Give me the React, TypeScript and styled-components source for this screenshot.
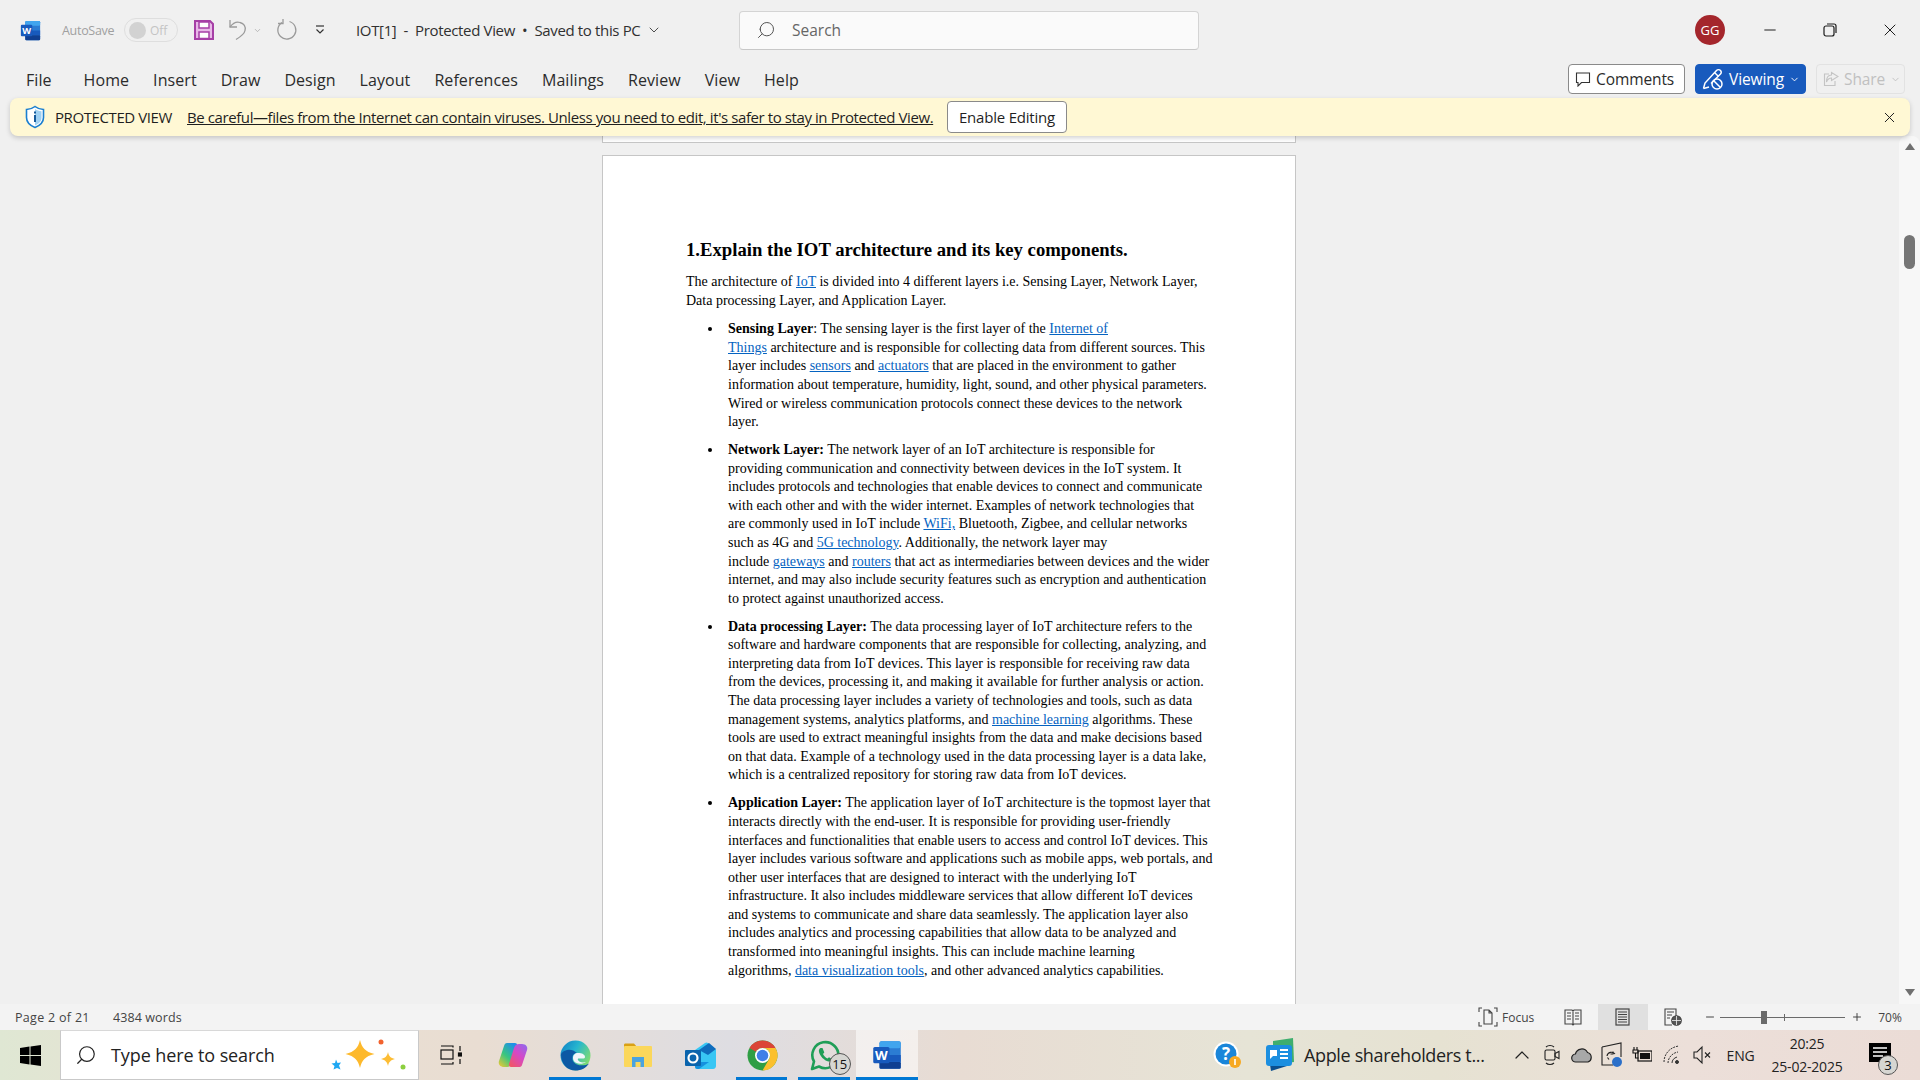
import React from 'react';
import styled, { createGlobalStyle } from 'styled-components';
import { ChevronDown, ChevronUp, Minus, Plus, Search, X } from 'lucide-react';

const GlobalStyle = createGlobalStyle`
  html, body { margin: 0; padding: 0; overflow: hidden; }
  * { box-sizing: border-box; }
  body { font-family: 'Open Sans', 'Noto Sans', sans-serif; color: #262626; }
`;

const Window = styled.div`
  width: 1920px;
  height: 1080px;
  display: flex;
  flex-direction: column;
  background: #f0f0f0;
  overflow: hidden;
`;

const TitleBar = styled.div`
  height: 60px;
  display: flex;
  align-items: center;
  padding-left: 20px;
  flex: none;
`;

const AutoSaveLabel = styled.span`
  margin-left: 21px;
  width: 62px;
  font-size: 12.5px;
  letter-spacing: -0.3px;
  color: #a0a0a0;
`;

const Toggle = styled.div`
  width: 54px;
  height: 24px;
  border: 1px solid #dedede;
  border-radius: 12px;
  display: flex;
  align-items: center;
  padding-left: 4px;
  gap: 4px;
  font-size: 12px;
  color: #c4c4c4;
  &::before {
    content: '';
    width: 17px;
    height: 17px;
    border-radius: 50%;
    background: #d2d2d2;
  }
`;

const QuickIcon = styled.span<{ $w: number; $ml?: number }>`
  width: ${({ $w }) => $w}px;
  margin-left: ${({ $ml }) => $ml ?? 0}px;
  display: flex;
  align-items: center;
  justify-content: center;
  flex: none;
`;

const DocTitle = styled.span`
  margin-left: 30px;
  width: 290px;
  font-size: 15px;
  letter-spacing: -0.35px;
  white-space: pre;
  color: #303030;
`;

const SearchBox = styled.div`
  margin-left: 77px;
  width: 460px;
  height: 39px;
  background: #fafafa;
  border: 1px solid #d4d4d4;
  border-bottom-color: #c8c8c8;
  border-radius: 4px;
  display: flex;
  align-items: center;
  padding-left: 16px;
  gap: 16px;
  font-size: 15.5px;
  color: #666;
`;

const Avatar = styled.div`
  margin-left: 496px;
  width: 30px;
  height: 30px;
  border-radius: 50%;
  background: #a4262c;
  color: #fff;
  font-size: 13px;
  display: flex;
  align-items: center;
  justify-content: center;
`;

const WindowButton = styled.div<{ $ml: number }>`
  margin-left: ${({ $ml }) => $ml}px;
  width: 20px;
  display: flex;
  justify-content: center;
  color: #1c1c1c;
`;

const RibbonRow = styled.div`
  height: 38px;
  flex: none;
  display: flex;
  align-items: center;
  padding: 0 15px 0 26px;
`;

const Tab = styled.span<{ $first?: boolean }>`
  margin-top: 2px;
  font-size: 16px;
  letter-spacing: 0.07px;
  margin-right: ${({ $first }) => ($first ? 32 : 24)}px;
  color: #2b2b2b;
`;

const RibbonActions = styled.div`
  margin-left: auto;
  display: flex;
  gap: 10px;
  height: 30px;
`;

const ActionButton = styled.div<{ $w: number; $kind: 'plain' | 'primary' | 'off' }>`
  width: ${({ $w }) => $w}px;
  height: 30px;
  border-radius: 4px;
  display: flex;
  align-items: center;
  gap: 5px;
  padding-left: 6px;
  font-size: 15.5px;
  letter-spacing: -0.1px;
  background: ${({ $kind }) => ($kind === 'plain' ? '#fff' : $kind === 'primary' ? '#185abd' : '#f0f0f0')};
  color: ${({ $kind }) => ($kind === 'plain' ? '#2b2b2b' : $kind === 'primary' ? '#fff' : '#c0c0c0')};
  border: 1px solid ${({ $kind }) => ($kind === 'plain' ? '#8a8a8a' : $kind === 'primary' ? '#185abd' : '#e2e2e2')};
`;

const Banner = styled.div`
  flex: none;
  position: relative;
  z-index: 2;
  height: 38px;
  margin: 0 10px;
  padding: 0 12px 0 15px;
  display: flex;
  align-items: center;
  background: #fff8d4;
  border-radius: 8px;
  box-shadow: 0 2px 5px rgba(0, 0, 0, 0.18);
  font-size: 15px;
  letter-spacing: -0.41px;
  color: #1f1f1f;
`;

const BannerTitle = styled.span`
  margin-left: 10px;
  margin-right: 12px;
  width: 120px;
  white-space: nowrap;
`;

const BannerLink = styled.span`
  width: 760px;
  white-space: nowrap;
  text-decoration: underline;
`;

const EnableButton = styled.div`
  width: 120px;
  height: 32px;
  background: #fff;
  border: 1px solid #8a8a8a;
  border-radius: 4px;
  display: flex;
  align-items: center;
  justify-content: center;
  letter-spacing: -0.2px;
`;

const BannerClose = styled.div`
  margin-left: auto;
  display: flex;
`;

const DocArea = styled.div`
  flex: 1;
  min-height: 0;
  display: flex;
`;

const PageColumn = styled.div`
  flex: 1;
  min-width: 0;
  padding-right: 2px;
  display: flex;
  flex-direction: column;
  align-items: center;
  overflow: hidden;
`;

const PageStub = styled.div`
  flex: none;
  width: 694px;
  height: 7px;
  background: #fff;
  border: 1px solid #c6c6c6;
  border-top: none;
`;

const Page = styled.div`
  flex: none;
  width: 694px;
  height: 900px;
  margin-top: 12px;
  padding: 82px 0 0 83.5px;
  background: #fff;
  border: 1px solid #c6c6c6;
  font-family: 'Liberation Serif', 'Times New Roman', serif;
  color: #000;
  font-size: 14px;
  line-height: 18.6px;
  white-space: nowrap;
`;

const Heading = styled.h1`
  margin: 0 0 11px;
  font-size: 18.7px;
  line-height: 24px;
  font-weight: 700;
`;

const Line = styled.span`
  display: block;
`;

const Intro = styled.p`
  margin: 0 0 10px;
`;

const List = styled.ul`
  margin: 0;
  padding: 0 0 0 42px;
  list-style: none;
`;

const Item = styled.li`
  position: relative;
  margin-bottom: 9.3px;
  &::before {
    content: '';
    position: absolute;
    left: -20px;
    top: 7px;
    width: 4px;
    height: 4px;
    border-radius: 50%;
    background: #000;
  }
`;

const Link = styled.span`
  color: #0563c1;
  text-decoration: underline;
`;

const Scrollbar = styled.div`
  flex: none;
  width: 21px;
  display: flex;
  flex-direction: column;
  align-items: center;
  background: #f7f7f7;
  border-radius: 8px 8px 0 0;
`;

const ScrollArrow = styled.div<{ $down?: boolean }>`
  width: 0;
  height: 0;
  border-left: 5.5px solid transparent;
  border-right: 5.5px solid transparent;
  ${({ $down }) => ($down ? 'border-top: 7px solid #707070;' : 'border-bottom: 7px solid #707070;')}
  margin-top: ${({ $down }) => ($down ? 'auto' : '7px')};
  margin-bottom: ${({ $down }) => ($down ? '8px' : '0')};
`;

const ScrollThumb = styled.div`
  margin-top: 85px;
  width: 11px;
  height: 34px;
  border-radius: 5.5px;
  background: #757575;
`;

const StatusBar = styled.div`
  flex: none;
  height: 26px;
  display: flex;
  align-items: center;
  padding-left: 15px;
  background: #f3f3f3;
  font-size: 12px;
  color: #444;
`;

const StatusText = styled.span<{ $w: number; $ls: number }>`
  width: ${({ $w }) => $w}px;
  font-size: 12.5px;
  letter-spacing: ${({ $ls }) => $ls}px;
  white-space: nowrap;
`;

const StatusRight = styled.div`
  margin-left: auto;
  height: 100%;
  padding-right: 9px;
  display: flex;
  align-items: center;
`;

const FocusButton = styled.div`
  width: 69px;
  height: 100%;
  display: flex;
  align-items: center;
  gap: 4px;
`;

const ViewButton = styled.div<{ $w: number; $active?: boolean }>`
  width: ${({ $w }) => $w}px;
  height: 100%;
  display: flex;
  align-items: center;
  justify-content: center;
  background: ${({ $active }) => ($active ? '#e0e0e0' : 'transparent')};
`;

const ZoomOut = styled.span`
  margin: 0 4px 0 6px;
  display: flex;
`;

const ZoomTrack = styled.div`
  position: relative;
  width: 125px;
  height: 1px;
  margin-right: 6px;
  background: #6a6a6a;
`;

const ZoomTick = styled.div`
  position: absolute;
  left: 64px;
  top: -3px;
  width: 1px;
  height: 7px;
  background: #6a6a6a;
`;

const ZoomThumb = styled.div`
  position: absolute;
  left: 41px;
  top: -6px;
  width: 6px;
  height: 13px;
  background: #6a6a6a;
`;

const ZoomValue = styled.span`
  width: 42px;
  margin-left: 6px;
  text-align: center;
`;

const Taskbar = styled.div`
  flex: none;
  height: 50px;
  display: flex;
  background: linear-gradient(90deg, #dfe7d3 0%, #e9e1d3 10%, #e9ddd2 25%, #dedde2 38%, #e8dcd3 50%, #e6e4d6 65%, #e6e2d2 75%, #ecdfd9 88%, #ebdcd6 100%);
`;

const StartCell = styled.div`
  width: 60px;
  display: flex;
  align-items: center;
  justify-content: center;
  flex: none;
`;

const TaskSearch = styled.div`
  position: relative;
  width: 359px;
  flex: none;
  background: #fff;
  border: 1px solid #c9c9c9;
  border-top-color: #d8d8d8;
  display: flex;
  align-items: center;
  padding-left: 14px;
  gap: 14px;
  font-size: 18px;
  letter-spacing: -0.1px;
  color: #222;
`;

const Sparkles = styled.span`
  position: absolute;
  right: 10px;
  top: 7px;
  display: flex;
`;

const TaskView = styled.div`
  width: 63px;
  flex: none;
  display: flex;
  align-items: center;
  justify-content: center;
`;

const TaskIcon = styled.div<{ $open?: boolean; $active?: boolean }>`
  position: relative;
  width: 62.3px;
  flex: none;
  display: flex;
  align-items: center;
  justify-content: center;
  background: ${({ $active }) => ($active ? 'rgba(255,255,255,0.55)' : 'transparent')};
  &::after {
    content: '';
    display: ${({ $open }) => ($open ? 'block' : 'none')};
    position: absolute;
    left: ${({ $active }) => ($active ? '0' : '5px')};
    right: ${({ $active }) => ($active ? '0' : '6px')};
    bottom: 0;
    height: 3px;
    background: #0078d4;
  }
`;

const CountBadge = styled.span<{ $right: number; $size: number }>`
  position: absolute;
  right: ${({ $right }) => $right}px;
  bottom: 5px;
  width: ${({ $size }) => $size}px;
  height: ${({ $size }) => $size}px;
  border-radius: 50%;
  border: 1px solid #555;
  background: #d6d6d2;
  color: #111;
  font-size: 13px;
  display: flex;
  align-items: center;
  justify-content: center;
`;

const Tray = styled.div`
  margin-left: auto;
  display: flex;
  align-items: stretch;
`;

const TrayCell = styled.div<{ $w: number; $ml?: number }>`
  position: relative;
  width: ${({ $w }) => $w}px;
  margin-left: ${({ $ml }) => $ml ?? 0}px;
  display: flex;
  align-items: center;
  justify-content: center;
  flex: none;
`;

const NewsText = styled.span`
  width: 180px;
  margin-left: 6px;
  display: flex;
  align-items: center;
  font-size: 18px;
  letter-spacing: -0.35px;
  white-space: nowrap;
  color: #222;
`;

const TrayText = styled.span`
  font-size: 14px;
  letter-spacing: -0.2px;
  color: #222;
`;

const Clock = styled.div`
  display: flex;
  flex-direction: column;
  align-items: center;
  gap: 6px;
  font-size: 14px;
  line-height: 17px;
  letter-spacing: -0.2px;
  color: #222;
`;

const NotifyCell = styled.div`
  position: relative;
  width: 70px;
  padding-right: 10px;
  display: flex;
  align-items: center;
  justify-content: center;
  flex: none;
`;

const WordLogo = ({ size }: { size: number }) => (
  <svg width={size} height={size} viewBox="0 0 24 24">
    <rect x="6" y="1" width="17" height="22" rx="1.5" fill="#2b7cd3" />
    <rect x="6" y="1" width="17" height="5.5" rx="1.5" fill="#41a5ee" />
    <rect x="6" y="12" width="17" height="5.5" fill="#185abd" />
    <rect x="6" y="17.5" width="17" height="5.5" rx="1" fill="#103f91" />
    <rect x="1" y="5.5" width="13" height="13" rx="1.2" fill="#185abd" />
    <text x="7.5" y="15.6" textAnchor="middle" fontSize="10.5" fontWeight="700" fill="#fff" fontFamily="Open Sans, sans-serif">W</text>
  </svg>
);

const SaveIcon = () => (
  <svg width="20" height="20" viewBox="0 0 20 20">
    <path d="M1 1h15l3 3v15H1z" fill="#e8b8e8" stroke="#a63fa6" strokeWidth="2" />
    <rect x="5" y="2" width="10" height="6" fill="#fff" stroke="#a63fa6" strokeWidth="1.5" />
    <rect x="5" y="12" width="10" height="6.5" fill="#fff" stroke="#a63fa6" strokeWidth="1.5" />
  </svg>
);

const UndoIcon = () => (
  <svg width="20" height="22" viewBox="0 0 20 22" fill="none" stroke="#9a9a9a" strokeWidth="1.3">
    <path d="M2 1v7h7" />
    <path d="M2 8C5 4 9 2.500 12 3.500c4 1 6 4 5 8-.5 3-4 6-9 9" />
  </svg>
);

const RedoIcon = () => (
  <svg width="22" height="22" viewBox="0 0 22 22" fill="none" stroke="#9a9a9a" strokeWidth="1.3">
    <path d="M13.500 2.500a9 9 0 1 1-7.500 1" />
    <path d="M7 0v4.500H2" />
  </svg>
);

const CustomizeIcon = () => (
  <svg width="12" height="12" viewBox="0 0 12 12" fill="none" stroke="#333" strokeWidth="1.2">
    <path d="M2 2h8" />
    <path d="M2.500 5.500 6 9l3.500-3.500" />
  </svg>
);

const ShieldIcon = () => (
  <svg width="20" height="24" viewBox="0 0 20 24">
    <path d="M10 1.500c2.500 2 5 2.800 8.500 3v8c0 5-3.500 8-8.500 10-5-2-8.500-5-8.500-10v-8c3.500-.2 6-1 8.500-3z" fill="#fff" stroke="#1b7fd0" strokeWidth="1.6" />
    <path d="M10 4c2 1.400 4 2 6.500 2.300v6.500c0 3.500-2.500 6-6.500 7.700z" fill="#9fd0f2" />
    <rect x="9" y="10" width="2" height="7" fill="#155a9c" />
    <rect x="9" y="6.500" width="2" height="2" fill="#155a9c" />
  </svg>
);

const CommentIcon = () => (
  <svg width="16" height="16" viewBox="0 0 16 16" fill="none" stroke="#333" strokeWidth="1.1">
    <path d="M1.500 2h13v9.500H6.500L3 15v-3.500H1.500z" />
  </svg>
);

const ViewingIcon = () => (
  <svg width="22" height="22" viewBox="0 0 22 22" fill="none" stroke="#fff" strokeWidth="1.500">
    <path d="M1.500 20.500 3 15 14.500 2.500c1-1 3-1 4 0s1 2.500 0 3.500L9 15.500" />
    <path d="M1.500 20.500 7 19" />
    <path d="M12.500 4.500 16.500 8.500" />
    <circle cx="15" cy="16" r="5" />
    <path d="m11.500 12.500 7 7" />
  </svg>
);

const ShareIcon = () => (
  <svg width="16" height="16" viewBox="0 0 16 16" fill="none" stroke="#c4c4c4" strokeWidth="1.100">
    <path d="M8.500 1.500 15 5.500l-6.500 4V7C5.500 7 4.500 8.500 3.500 11 3.500 6.500 5 4 8.500 4z" />
    <path d="M6 3H1.500v11.500H12V10" />
  </svg>
);

const WindowsLogo = () => (
  <svg width="21" height="21" viewBox="0 0 21 21" fill="#000">
    <path d="M0 3 9.500 1.600v8.400H0zM10.500 1.500 21 0v10H10.500zM0 11h9.500v8.400L0 18zM10.500 11H21v10l-10.500-1.500z" />
  </svg>
);

const SparkleIcons = () => (
  <svg width="78" height="34" viewBox="0 0 78 34">
    <path d="M6 21.500l1.500 3.500 3.500-.5-2 3 1.500 4-3.500-1.500-3.500 1.500 1-3.500-3-2.500 3.500-.5z" fill="#1ea7f2" />
    <path d="M30 2c2 8 5 11.500 14.500 14C35 18.500 32 22 30 30c-2-8-5-11.500-14.500-14C25 13.500 28 10 30 2z" fill="#fdb92c" />
    <path d="M58 14c.9 4 2.500 6 7 7-4.500 1-6.100 3-7 7-.9-4-2.500-6-7-7 4.500-1 6.100-3 7-7z" fill="#fdbd34" />
    <circle cx="51" cy="4" r="2.500" fill="#f2622e" />
    <circle cx="73" cy="29" r="2.500" fill="#8ccf3f" />
  </svg>
);

const TaskViewIcon = () => (
  <svg width="22" height="20" viewBox="0 0 22 20" fill="none" stroke="#111" strokeWidth="1.200">
    <rect x="1" y="5" width="12" height="9" />
    <path d="M1 1h12v1.500M1 19h12v-2" />
    <path d="M20 1v5M20 14v5" />
    <rect x="18.500" y="8" width="3" height="3" fill="#111" />
  </svg>
);

const CopilotIcon = () => (
  <svg width="30" height="26" viewBox="0 0 30 26">
    <defs>
      <linearGradient id="cpA" x1="0" y1="1" x2="0.700" y2="0">
        <stop offset="0" stopColor="#f6c92f" />
        <stop offset="0.500" stopColor="#39c67f" />
        <stop offset="1" stopColor="#1f8fe8" />
      </linearGradient>
      <linearGradient id="cpB" x1="0.200" y1="1" x2="1" y2="0">
        <stop offset="0" stopColor="#f0556a" />
        <stop offset="0.500" stopColor="#d548c8" />
        <stop offset="1" stopColor="#8a6cf0" />
      </linearGradient>
    </defs>
    <path d="M9 1h8c1.500 0 2.500 1 2 3l-5 16c-.8 3-2.500 5-5 5H6C2 25 0 22 1 19L6 4c.5-2 1.500-3 3-3z" fill="url(#cpA)" />
    <path d="M21 25h-8c-1.500 0-2.300-1-2-3l5-16c.8-2.500 2.500-4 5-4h3c4 0 6 3 5 6l-5 15c-.5 1.500-1.500 2-3 2z" fill="url(#cpB)" />
  </svg>
);

const EdgeIcon = () => (
  <svg width="31" height="31" viewBox="0 0 31 31">
    <defs>
      <linearGradient id="edA" x1="0" y1="0" x2="1" y2="0.600">
        <stop offset="0" stopColor="#0f7bc4" />
        <stop offset="0.500" stopColor="#26b6cf" />
        <stop offset="1" stopColor="#7fdc70" />
      </linearGradient>
    </defs>
    <circle cx="15.500" cy="15.500" r="15" fill="url(#edA)" />
    <path d="M1 14c0 10 6 16.500 14.500 16.500 6 0 10.500-2.500 13.500-7-3 2-8 2.500-12 1-3-1.200-5-4-4.500-7C12.800 14 15 13 17 13c-3-3-7-4-10-3-3 .800-5 2-6 4z" fill="#0c59a4" />
    <path d="M13 18c0-3 2-5 5-5 4 0 7 1.500 7 4 0 1-1 1.500-2.500 1.500H19c-1-.200-1.500.500-1 1.500 1 2 4 3 8 2-2.500 2-7 2.500-10 .8-2-1-3-2.800-3-4.800z" fill="#f0f6fa" />
  </svg>
);

const FolderIcon = () => (
  <svg width="28" height="24" viewBox="0 0 28 24">
    <path d="M0 2c0-1 .5-1.500 1.500-1.500H10L13 4H0z" fill="#d9a015" />
    <rect x="0" y="3" width="28" height="21" rx="1" fill="#fbd75b" />
    <path d="M8 14h12v10h-3.500v-5h-5v5H8z" fill="#4aa3e0" />
  </svg>
);

const OutlookIcon = () => (
  <svg width="31" height="27" viewBox="0 0 31 27">
    <path d="M10 8 20 1c1-.700 2-.700 3 0l7 5.500c.600.500 1 1 1 2V24c0 1.500-1 3-3 3H12c-1.500 0-2-1-2-2z" fill="#38c6f4" />
    <path d="M14 8 24 1l7 6-8 6z" fill="#0f6cbd" />
    <path d="M10 20h14l-10 7h-1.500c-1.500 0-2.500-1-2.500-3z" fill="#1490df" />
    <rect x="0" y="8" width="16" height="16" rx="1" fill="#0a64ad" />
    <circle cx="8" cy="16" r="4.500" fill="none" stroke="#fff" strokeWidth="2.200" />
  </svg>
);

const ChromeIcon = () => (
  <svg width="31" height="31" viewBox="0 0 31 31">
    <circle cx="15.500" cy="15.500" r="15" fill="#2f9e44" />
    <path d="M15.500.5a15 15 0 0 1 13 7.500h-13a7.500 7.500 0 0 0-6.500 3.750L2.500 8A15 15 0 0 1 15.500.5z" fill="#db4437" />
    <path d="M28.500 8a15 15 0 0 1-13 22.500l6.500-11.250A7.500 7.500 0 0 0 15.500 8z" fill="#fbc02d" />
    <circle cx="15.500" cy="15.500" r="7.500" fill="#fff" />
    <circle cx="15.500" cy="15.500" r="5.800" fill="#3f7fe8" />
  </svg>
);

const WhatsAppIcon = () => (
  <svg width="30" height="31" viewBox="0 0 30 31" fill="none">
    <path d="M2 29l2-7.500A13 13 0 1 1 9 26.500z" stroke="#1f9e57" strokeWidth="2.600" strokeLinejoin="round" />
    <path d="M10.500 8c-1 .500-2 2-1.500 4 1 4 5 8.500 9.500 9.500 2 .300 3.500-1 3.800-2.300l-3.300-2-1.500 1.300c-2-.800-3.800-2.800-4.500-4.500l1.300-1.500L12.500 8z" fill="#1f9e57" />
  </svg>
);

const HelpIcon = () => (
  <svg width="30" height="30" viewBox="0 0 30 30">
    <circle cx="13" cy="14" r="12.500" fill="#fff" />
    <circle cx="13" cy="14" r="10.500" fill="#1a86d9" />
    <text x="13" y="20" textAnchor="middle" fontSize="17" fontWeight="700" fill="#fff" fontFamily="Open Sans, sans-serif">?</text>
    <circle cx="22" cy="22" r="6" fill="#f7a922" />
    <rect x="21.200" y="19" width="1.600" height="6" fill="#fff" />
  </svg>
);

const NewsIcon = () => (
  <svg width="30" height="34" viewBox="0 0 30 34">
    <path d="M8 3 28 0l1 24-21 3z" fill="#3fae6e" />
    <path d="M3 14 22 12v16L6 33z" fill="#0a4f8f" />
    <rect x="1" y="7" width="26" height="21" rx="3" fill="#1c8fe0" />
    <path d="M5 12h7v6H8l-3 3z" fill="#fff" />
    <path d="M15 12h8M15 16h8M15 20h8" stroke="#fff" strokeWidth="1.800" />
  </svg>
);

const MeetIcon = () => (
  <svg width="16" height="22" viewBox="0 0 16 22" fill="none" stroke="#222" strokeWidth="1.100">
    <rect x="1" y="6" width="10" height="10" rx="1.500" />
    <path d="M11 9.500 15 7.500v7l-4-2z" />
    <path d="M2 3c2-2 6-2 8 0M2 19c2 2 6 2 8 0" />
  </svg>
);

const CloudIcon = () => (
  <svg width="22" height="16" viewBox="0 0 22 16">
    <path d="M5 15a4 4 0 0 1-.6-8A6.500 6.500 0 0 1 16.500 5.500 5 5 0 0 1 17 15z" fill="#a8a8a8" stroke="#222" strokeWidth="1.200" />
  </svg>
);

const SyncIcon = () => (
  <svg width="22" height="26" viewBox="0 0 22 26" fill="none" stroke="#222" strokeWidth="1.100">
    <path d="M1 5 20 1v14M1 5v18h11" />
    <path d="M6 14a4.500 4.500 0 0 1 8-2M12 9.500V12H9.500M6.500 15.500 8 17.500" />
    <circle cx="16" cy="20" r="5" fill="#2a6fc9" stroke="none" />
  </svg>
);

const BatteryIcon = () => (
  <svg width="20" height="18" viewBox="0 0 20 18">
    <rect x="6" y="5" width="14" height="10" fill="none" stroke="#111" strokeWidth="1.200" />
    <rect x="8" y="7" width="10" height="6" fill="#111" />
    <path d="M2 1v3M5 1v3M1 4h5v3H1zM3.500 7v5h3" fill="none" stroke="#111" strokeWidth="1.100" />
  </svg>
);

const WifiIcon = () => (
  <svg width="18" height="20" viewBox="0 0 18 20" fill="none" stroke="#333" strokeWidth="1">
    <path d="M1 17C1 9 7 2 16 1" strokeDasharray="2 1" />
    <path d="M5 18c0-5 4-10 10-11" strokeDasharray="2 1" />
    <path d="M9 18c0-3 2-5 5-6" />
    <circle cx="14" cy="17" r="1.500" fill="#333" />
  </svg>
);

const MuteIcon = () => (
  <svg width="20" height="20" viewBox="0 0 20 20" fill="none" stroke="#222" strokeWidth="1.100">
    <path d="M2 7h3l5-5v16l-5-5H2z" />
    <path d="m13 7.500 5 5M18 7.500l-5 5" />
  </svg>
);

const NotifyIcon = () => (
  <svg width="22" height="24" viewBox="0 0 22 24">
    <path d="M0 0h22v19h-8l-4 4v-4H0z" fill="#000" />
    <path d="M4 5h14M4 9h14M4 13h10" stroke="#fff" strokeWidth="1.300" />
  </svg>
);

const FocusIcon = () => (
  <svg width="20" height="20" viewBox="0 0 20 20" fill="none" stroke="#444" strokeWidth="1.100">
    <path d="M1 5V1h3M16 1h3v4M1 15v4h3M16 19h3v-4" />
    <path d="M6 3h5l3 3v11H6zM11 3v3h3" />
  </svg>
);

const ReadIcon = () => (
  <svg width="18" height="18" viewBox="0 0 18 18" fill="none" stroke="#444" strokeWidth="1.100">
    <path d="M1 2h7l1 1 1-1h7v14h-7l-1 1-1-1H1zM9 3v13" />
    <path d="M3 5h4M3 8h4M3 11h4M11 5h4M11 8h4M11 11h4" />
  </svg>
);

const PrintIcon = () => (
  <svg width="16" height="18" viewBox="0 0 16 18" fill="none" stroke="#444" strokeWidth="1.200">
    <rect x="1" y="1" width="13" height="16" />
    <path d="M3 4h9M3 6.500h9M3 9h9M3 11.500h9M3 14h9" />
  </svg>
);

const WebIcon = () => (
  <svg width="18" height="18" viewBox="0 0 18 18" fill="none" stroke="#444" strokeWidth="1.100">
    <path d="M8 17H1V1h11v7" />
    <path d="M3 4h7M3 7h5M3 10h3" />
    <circle cx="12.500" cy="12.500" r="4.800" fill="#555" />
    <path d="M8 12.500h9M12.500 8v9" stroke="#f3f3f3" strokeWidth="0.800" />
  </svg>
);

const tabs = ['File', 'Home', 'Insert', 'Draw', 'Design', 'Layout', 'References', 'Mailings', 'Review', 'View', 'Help'];

const App = () => (
  <Window>
    <GlobalStyle />
    <TitleBar>
      <WordLogo size={21} />
      <AutoSaveLabel>AutoSave</AutoSaveLabel>
      <Toggle>Off</Toggle>
      <QuickIcon $w={21} $ml={15}><SaveIcon /></QuickIcon>
      <QuickIcon $w={22} $ml={13}><UndoIcon /></QuickIcon>
      <QuickIcon $w={10} $ml={3}><ChevronDown size={9} color="#aaa" /></QuickIcon>
      <QuickIcon $w={22} $ml={14}><RedoIcon /></QuickIcon>
      <QuickIcon $w={12} $ml={16}><CustomizeIcon /></QuickIcon>
      <DocTitle>IOT[1]  -  Protected View  •  Saved to this PC</DocTitle>
      <ChevronDown size={16} strokeWidth={1.300} color="#333" />
      <SearchBox>
        <Search size={20} strokeWidth={1.200} color="#555" style={{ transform: 'scaleX(-1)' }} />
        Search
      </SearchBox>
      <Avatar>GG</Avatar>
      <WindowButton $ml={35}><Minus size={18} strokeWidth={1.300} /></WindowButton>
      <WindowButton $ml={40}>
        <svg width="14" height="14" viewBox="0 0 14 14" fill="none" stroke="#1c1c1c" strokeWidth="1.200">
          <rect x="1" y="3" width="10" height="10" rx="2" />
          <path d="M4 1h7a2 2 0 0 1 2 2v7" />
        </svg>
      </WindowButton>
      <WindowButton $ml={40}><X size={20} strokeWidth={1.200} /></WindowButton>
    </TitleBar>
    <RibbonRow>
      {tabs.map((t, i) => (
        <Tab key={t} $first={i === 0}>{t}</Tab>
      ))}
      <RibbonActions>
        <ActionButton $w={117} $kind="plain"><CommentIcon />Comments</ActionButton>
        <ActionButton $w={111} $kind="primary"><ViewingIcon />Viewing<ChevronDown size={11} strokeWidth={2} /></ActionButton>
        <ActionButton $w={89} $kind="off"><ShareIcon />Share<ChevronDown size={11} strokeWidth={2} /></ActionButton>
      </RibbonActions>
    </RibbonRow>
    <Banner>
      <ShieldIcon />
      <BannerTitle>PROTECTED VIEW</BannerTitle>
      <BannerLink>Be careful—files from the Internet can contain viruses. Unless you need to edit, it's safer to stay in Protected View.</BannerLink>
      <EnableButton>Enable Editing</EnableButton>
      <BannerClose><X size={17} strokeWidth={1.400} /></BannerClose>
    </Banner>
    <DocArea>
      <PageColumn>
        <PageStub />
        <Page>
          <Heading>1.Explain the IOT architecture and its key components.</Heading>
          <Intro>
            <Line>The architecture of <Link>IoT</Link> is divided into 4 different layers i.e. Sensing Layer, Network Layer,</Line>
            <Line>Data processing Layer, and Application Layer.</Line>
          </Intro>
          <List>
            <Item>
              <Line><b>Sensing Layer</b>: The sensing layer is the first layer of the <Link>Internet of</Link></Line>
              <Line><Link>Things</Link> architecture and is responsible for collecting data from different sources. This</Line>
              <Line>layer includes <Link>sensors</Link> and <Link>actuators</Link> that are placed in the environment to gather</Line>
              <Line>information about temperature, humidity, light, sound, and other physical parameters.</Line>
              <Line>Wired or wireless communication protocols connect these devices to the network</Line>
              <Line>layer.</Line>
            </Item>
            <Item>
              <Line><b>Network Layer:</b> The network layer of an IoT architecture is responsible for</Line>
              <Line>providing communication and connectivity between devices in the IoT system. It</Line>
              <Line>includes protocols and technologies that enable devices to connect and communicate</Line>
              <Line>with each other and with the wider internet. Examples of network technologies that</Line>
              <Line>are commonly used in IoT include <Link>WiFi,</Link> Bluetooth, Zigbee, and cellular networks</Line>
              <Line>such as 4G and <Link>5G technology</Link>. Additionally, the network layer may</Line>
              <Line>include <Link>gateways</Link> and <Link>routers</Link> that act as intermediaries between devices and the wider</Line>
              <Line>internet, and may also include security features such as encryption and authentication</Line>
              <Line>to protect against unauthorized access.</Line>
            </Item>
            <Item>
              <Line><b>Data processing Layer:</b> The data processing layer of IoT architecture refers to the</Line>
              <Line>software and hardware components that are responsible for collecting, analyzing, and</Line>
              <Line>interpreting data from IoT devices. This layer is responsible for receiving raw data</Line>
              <Line>from the devices, processing it, and making it available for further analysis or action.</Line>
              <Line>The data processing layer includes a variety of technologies and tools, such as data</Line>
              <Line>management systems, analytics platforms, and <Link>machine learning</Link> algorithms. These</Line>
              <Line>tools are used to extract meaningful insights from the data and make decisions based</Line>
              <Line>on that data. Example of a technology used in the data processing layer is a data lake,</Line>
              <Line>which is a centralized repository for storing raw data from IoT devices.</Line>
            </Item>
            <Item>
              <Line><b>Application Layer:</b> The application layer of IoT architecture is the topmost layer that</Line>
              <Line>interacts directly with the end-user. It is responsible for providing user-friendly</Line>
              <Line>interfaces and functionalities that enable users to access and control IoT devices. This</Line>
              <Line>layer includes various software and applications such as mobile apps, web portals, and</Line>
              <Line>other user interfaces that are designed to interact with the underlying IoT</Line>
              <Line>infrastructure. It also includes middleware services that allow different IoT devices</Line>
              <Line>and systems to communicate and share data seamlessly. The application layer also</Line>
              <Line>includes analytics and processing capabilities that allow data to be analyzed and</Line>
              <Line>transformed into meaningful insights. This can include machine learning</Line>
              <Line>algorithms, <Link>data visualization tools</Link>, and other advanced analytics capabilities.</Line>
            </Item>
          </List>
        </Page>
      </PageColumn>
      <Scrollbar>
        <ScrollArrow />
        <ScrollThumb />
        <ScrollArrow $down />
      </Scrollbar>
    </DocArea>
    <StatusBar>
      <StatusText $w={98} $ls={0.3}>Page 2 of 21</StatusText>
      <StatusText $w={80} $ls={0.1}>4384 words</StatusText>
      <StatusRight>
        <FocusButton><FocusIcon />Focus</FocusButton>
        <ViewButton $w={51}><ReadIcon /></ViewButton>
        <ViewButton $w={50} $active><PrintIcon /></ViewButton>
        <ViewButton $w={50}><WebIcon /></ViewButton>
        <ZoomOut><Minus size={12} color="#444" /></ZoomOut>
        <ZoomTrack><ZoomTick /><ZoomThumb /></ZoomTrack>
        <Plus size={12} color="#444" />
        <ZoomValue>70%</ZoomValue>
      </StatusRight>
    </StatusBar>
    <Taskbar>
      <StartCell><WindowsLogo /></StartCell>
      <TaskSearch>
        <Search size={22} strokeWidth={1.300} color="#222" style={{ transform: 'scaleX(-1)' }} />
        Type here to search
        <Sparkles><SparkleIcons /></Sparkles>
      </TaskSearch>
      <TaskView><TaskViewIcon /></TaskView>
      <TaskIcon><CopilotIcon /></TaskIcon>
      <TaskIcon $open><EdgeIcon /></TaskIcon>
      <TaskIcon><FolderIcon /></TaskIcon>
      <TaskIcon><OutlookIcon /></TaskIcon>
      <TaskIcon $open><ChromeIcon /></TaskIcon>
      <TaskIcon $open><WhatsAppIcon /><CountBadge $right={5} $size={22}>15</CountBadge></TaskIcon>
      <TaskIcon $open $active><WordLogo size={30} /></TaskIcon>
      <Tray>
        <TrayCell $w={40}><HelpIcon /></TrayCell>
        <TrayCell $w={36} $ml={14}><NewsIcon /></TrayCell>
        <NewsText>Apple shareholders t...</NewsText>
        <TrayCell $w={30} $ml={23}><ChevronUp size={24} strokeWidth={1.200} color="#222" /></TrayCell>
        <TrayCell $w={30}><MeetIcon /></TrayCell>
        <TrayCell $w={30}><CloudIcon /></TrayCell>
        <TrayCell $w={30}><SyncIcon /></TrayCell>
        <TrayCell $w={30}><BatteryIcon /></TrayCell>
        <TrayCell $w={30}><WifiIcon /></TrayCell>
        <TrayCell $w={30}><MuteIcon /></TrayCell>
        <TrayCell $w={47}><TrayText>ENG</TrayText></TrayCell>
        <TrayCell $w={86}><Clock><span>20:25</span><span>25-02-2025</span></Clock></TrayCell>
        <NotifyCell><NotifyIcon /><CountBadge $right={22} $size={20}>3</CountBadge></NotifyCell>
      </Tray>
    </Taskbar>
  </Window>
);

export default App;
